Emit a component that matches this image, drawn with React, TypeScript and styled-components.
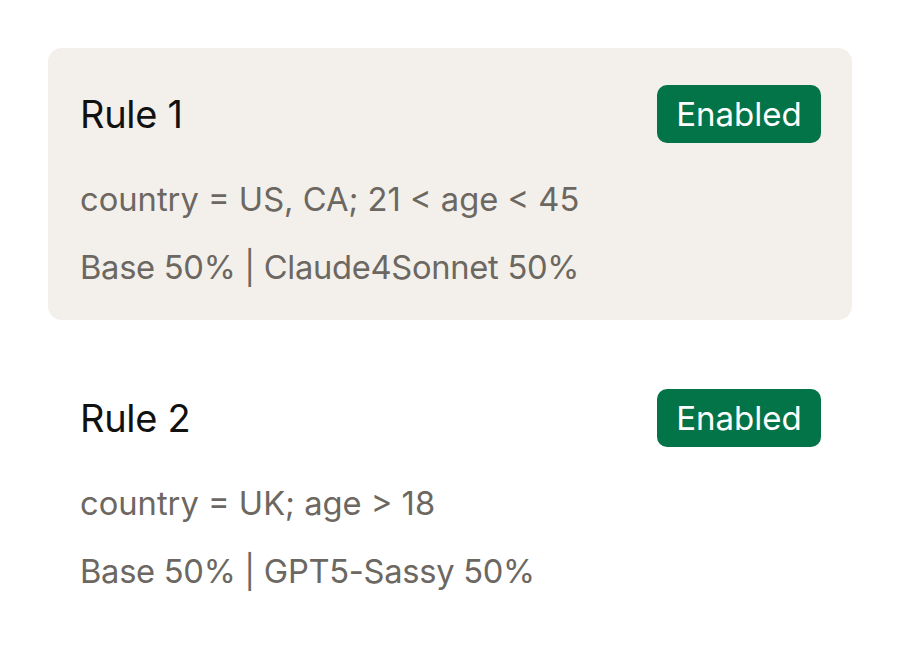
import React from 'react'
import styled, { createGlobalStyle } from 'styled-components'

const GlobalStyle = createGlobalStyle`
  html, body {
    margin: 0;
    padding: 0;
    background: #ffffff;
    font-family: Inter, "Noto Sans", "Liberation Sans", sans-serif;
  }
`

const Page = styled.div`
  display: flex;
  flex-direction: column;
  gap: 32px;
  padding: 48px;
  width: 900px;
  box-sizing: border-box;
`

const Card = styled.div<{ $active?: boolean }>`
  display: flex;
  flex-direction: column;
  height: 272px;
  box-sizing: border-box;
  padding: 37px 31px 0 32px;
  border-radius: 14px;
  background: ${({ $active }) => ($active ? '#f3f0eb' : 'transparent')};
`

const Header = styled.div`
  display: flex;
  align-items: center;
  justify-content: space-between;
  height: 58px;
  margin-bottom: 34px;
`

const Title = styled.h2`
  margin: 0;
  font-size: 38px;
  font-weight: 400;
  color: #111111;
  letter-spacing: -0.3px;
`

const Badge = styled.span`
  display: inline-flex;
  align-items: center;
  justify-content: center;
  height: 58px;
  width: 164px;
  box-sizing: border-box;
  border-radius: 10px;
  background: #037448;
  color: #ffffff;
  font-size: 33px;
  font-weight: 400;
`

const Line = styled.div<{ $tight?: boolean }>`
  font-size: 32.7px;
  line-height: 44px;
  color: #6c6761;
  margin-bottom: 24px;
  white-space: nowrap;
  letter-spacing: ${({ $tight }) => ($tight ? '-0.3px' : '0')};
`

const rules = [
  {
    name: 'Rule 1',
    condition: 'country = US, CA; 21 < age < 45',
    split: 'Base 50% | Claude4Sonnet 50%',
    active: true,
  },
  {
    name: 'Rule 2',
    condition: 'country = UK; age > 18',
    split: 'Base 50% | GPT5-Sassy 50%',
    active: false,
  },
]

export default function App() {
  return (
    <>
      <GlobalStyle />
      <Page>
        {rules.map((r) => (
          <Card key={r.name} $active={r.active}>
            <Header>
              <Title>{r.name}</Title>
              <Badge>Enabled</Badge>
            </Header>
            <Line>{r.condition}</Line>
            <Line $tight>{r.split}</Line>
          </Card>
        ))}
      </Page>
    </>
  )
}
